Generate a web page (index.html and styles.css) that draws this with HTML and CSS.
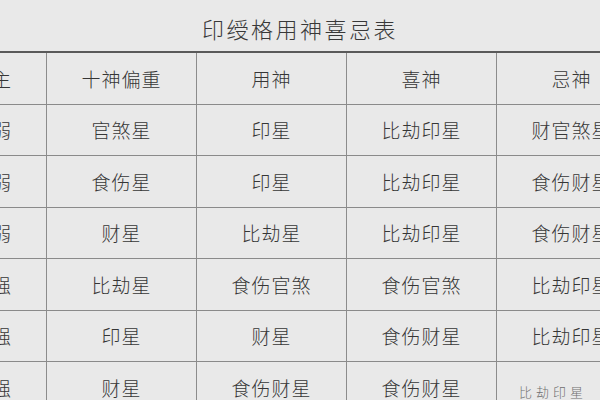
FILE: index.html
```html
<!DOCTYPE html>
<html lang="zh">
<head>
<meta charset="utf-8">
<link rel="stylesheet" href="styles.css">
</head>
<body>
<div class="page">
  <h1 class="title">印绶格用神喜忌表</h1>
  <div class="table">
    <div class="cell head">日主</div><div class="cell head">十神偏重</div><div class="cell head">用神</div><div class="cell head">喜神</div><div class="cell head">忌神</div>
    <div class="cell">身弱</div><div class="cell">官煞星</div><div class="cell">印星</div><div class="cell">比劫印星</div><div class="cell">财官煞星</div>
    <div class="cell">身弱</div><div class="cell">食伤星</div><div class="cell">印星</div><div class="cell">比劫印星</div><div class="cell">食伤财星</div>
    <div class="cell">身弱</div><div class="cell">财星</div><div class="cell">比劫星</div><div class="cell">比劫印星</div><div class="cell">食伤财星</div>
    <div class="cell">身强</div><div class="cell">比劫星</div><div class="cell">食伤官煞</div><div class="cell">食伤官煞</div><div class="cell">比劫印星</div>
    <div class="cell">身强</div><div class="cell">印星</div><div class="cell">财星</div><div class="cell">食伤财星</div><div class="cell">比劫印星</div>
    <div class="cell">身强</div><div class="cell">财星</div><div class="cell">食伤财星</div><div class="cell">食伤财星</div><div class="cell faint">比劫印星</div>
  </div>
</div>
</body>
</html>
```
FILE: styles.css
```css
html, body {
  margin: 0;
  padding: 0;
  background: #e9e9e9;
  width: 600px;
  height: 400px;
  overflow: hidden;
}
.page {
  width: 600px;
  height: 400px;
  overflow: hidden;
  font-family: "Noto Sans CJK SC", "Noto Sans CJK JP", sans-serif;
  color: #363636;
}
.title {
  margin: 0;
  height: 51px;
  display: flex;
  align-items: center;
  justify-content: center;
  padding-top: 4px;
  box-sizing: border-box;
  font-size: 22px;
  font-weight: 300;
  letter-spacing: 2.5px;
  color: #383838;
}
.table {
  margin-left: -62px;
  width: 800px;
  display: grid;
  grid-template-columns: 109px 150px 150px 150px 150px;
  grid-auto-rows: 51.5px;
  border-top: 2px solid #5a5a5a;
}
.cell {
  display: flex;
  align-items: center;
  justify-content: center;
  border-right: 1px solid #8c8c8c;
  border-bottom: 1px solid #8a8a8a;
  font-size: 19px;
  font-weight: 300;
  letter-spacing: 1px;
  box-sizing: border-box;
}
.faint {
  justify-content: flex-start;
  font-size: 13px;
  color: #707070;
  letter-spacing: 4px;
  padding-top: 8px;
  padding-left: 22px;
}
```
